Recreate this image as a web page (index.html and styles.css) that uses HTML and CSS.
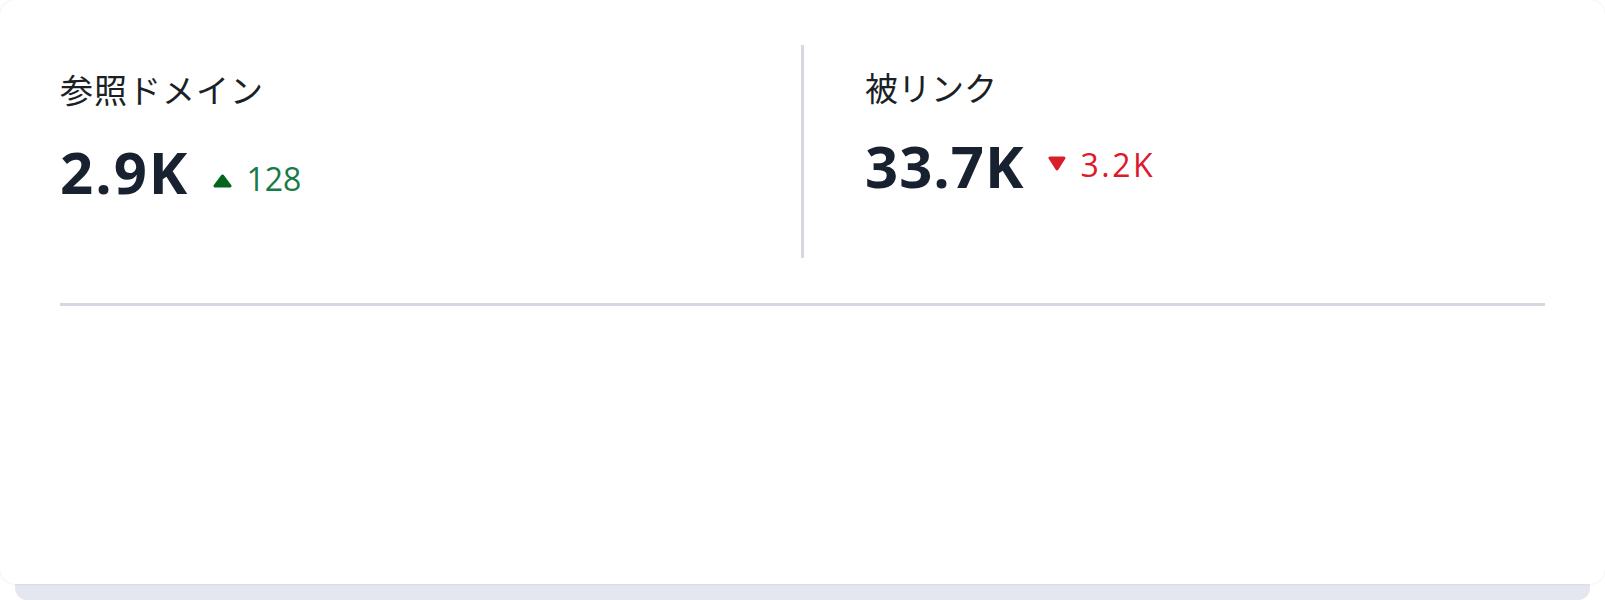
FILE: index.html
```html
<!DOCTYPE html>
<html lang="ja">
<head>
<meta charset="utf-8">
<title>Metrics</title>
<link rel="stylesheet" href="styles.css">
</head>
<body>
<div class="page">
  <section class="card">
    <div class="metrics">
      <div class="metric metric-left">
        <div class="label">参照ドメイン</div>
        <div class="value-row">
          <span class="value">2.9K</span>
          <span class="delta delta-up">
            <svg class="tri tri-up" width="19" height="14" viewBox="0 0 19 14"><polygon points="9.5,2 17,12 2,12" fill="#03661c" stroke="#03661c" stroke-width="3" stroke-linejoin="round"/></svg>
            <span class="delta-text">128</span>
          </span>
        </div>
      </div>
      <div class="metric metric-right">
        <div class="label">被リンク</div>
        <div class="value-row">
          <span class="value">33.7K</span>
          <span class="delta delta-down">
            <svg class="tri tri-down" width="18" height="15" viewBox="0 0 18 15"><polygon points="2,2 16,2 9,13" fill="#d91e2b" stroke="#d91e2b" stroke-width="3" stroke-linejoin="round"/></svg>
            <span class="delta-text">3.2K</span>
          </span>
        </div>
      </div>
    </div>
    <div class="rule"></div>
  </section>
  <div class="under"></div>
</div>
</body>
</html>
```

FILE: styles.css
```css
html, body {
  margin: 0;
  padding: 0;
  background: #ffffff;
}

.page {
  width: 1605px;
  height: 600px;
  overflow: hidden;
}

.card {
  box-sizing: border-box;
  height: 584px;
  padding: 45px 60px 0;
  background: #ffffff;
  border-radius: 16px;
  box-shadow: 0 0 3px rgba(0, 7, 22, 0.10);
  position: relative;
  z-index: 1;
}

.under {
  height: 20px;
  margin: -4px 15px 0;
  background: #e4e7ef;
  border-radius: 0 0 12px 12px;
}

.metrics {
  display: grid;
  grid-template-columns: 741px 1fr;
}

.metric {
  box-sizing: border-box;
  height: 213px;
}

.metric-left {
  padding-top: 24px;
}

.metric-right {
  border-left: 3px solid #d5d7e1;
  padding-left: 61px;
  padding-top: 22px;
}

.label {
  font-family: "Noto Sans CJK JP", "Open Sans", sans-serif;
  font-size: 33px;
  line-height: 40px;
  color: #1b1f26;
}

.metric-left .label {
  letter-spacing: 1px;
}

.value-row {
  display: flex;
  align-items: flex-end;
}

.metric-left .value-row {
  margin-top: 31px;
}

.metric-right .value-row {
  margin-top: 27px;
}

.value {
  font-family: "Open Sans", sans-serif;
  font-weight: 700;
  font-size: 58px;
  line-height: 64px;
  color: #18212f;
}

.metric-left .value {
  letter-spacing: 2px;
}

.metric-right .value {
  letter-spacing: 1px;
}

.delta {
  display: flex;
  align-items: center;
  font-family: "Open Sans", sans-serif;
  font-size: 32px;
  line-height: 40px;
}

.delta-up {
  color: #177a47;
  margin-left: 24px;
  margin-bottom: 5px;
}

.delta-down {
  color: #dd1a2b;
  margin-left: 23px;
  margin-bottom: 13px;
  letter-spacing: 2.5px;
}

.tri {
  display: block;
  flex: none;
}

.tri-up {
  margin-right: 14px;
  margin-top: 3px;
}

.tri-down {
  margin-right: 15px;
  margin-bottom: 4px;
}

.rule {
  margin-top: 45px;
  height: 3px;
  background: #d5d7e1;
}
```
